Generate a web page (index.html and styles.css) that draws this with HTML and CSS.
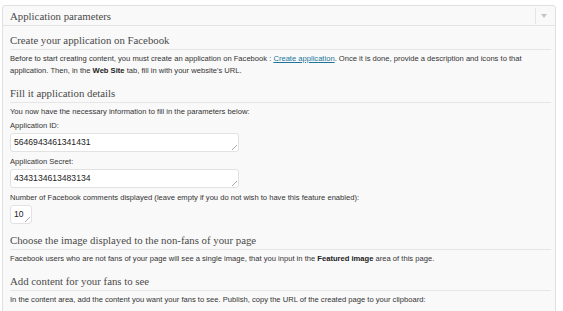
FILE: index.html
```html
<!DOCTYPE html>
<html>
<head>
<meta charset="utf-8">
<link rel="stylesheet" href="styles.css">
</head>
<body>
<div class="postbox">
  <div class="postbox-header">
    <h2 class="postbox-title">Application parameters</h2>
    <div class="toggle"><span class="arrow"></span></div>
  </div>
  <div class="inside">
    <h3 class="section-title">Create your application on Facebook</h3>
    <p class="text">Before to start creating content, you must create an application on Facebook : <a class="link" href="#">Create application</a>. Once it is done, provide a description and icons to that application. Then, in the <b>Web Site</b> tab, fill in with your website's URL.</p>

    <h3 class="section-title">Fill it application details</h3>
    <p class="text">You now have the necessary information to fill in the parameters below:</p>
    <label class="label">Application ID:</label>
    <div class="field wide">5646943461341431<span class="grip"></span></div>
    <label class="label">Application Secret:</label>
    <div class="field wide">4343134613483134<span class="grip"></span></div>
    <label class="label">Number of Facebook comments displayed (leave empty if you do not wish to have this feature enabled):</label>
    <div class="field small">10<span class="grip"></span></div>

    <h3 class="section-title">Choose the image displayed to the non-fans of your page</h3>
    <p class="text">Facebook users who are not fans of your page will see a single image, that you input in the <b>Featured image</b> area of this page.</p>

    <h3 class="section-title">Add content for your fans to see</h3>
    <p class="text">In the content area, add the content you want your fans to see. Publish, copy the URL of the created page to your clipboard:</p>
  </div>
</div>
</body>
</html>
```

FILE: styles.css
```css
html, body {
  margin: 0;
  padding: 0;
  background: #ffffff;
}

body {
  font-family: "Liberation Sans", Arial, sans-serif;
  color: #333333;
}

.postbox {
  margin: 5px 7px 0 2px;
  border: 1px solid #e0e0e0;
  border-radius: 3px;
  background: #f9f9f9;
  height: 320px;
}

.postbox-header {
  display: flex;
  align-items: center;
  height: 19px;
  border-bottom: 1px solid #e3e3e3;
}

.postbox-title {
  flex: 1;
  margin: 0;
  padding-left: 7px;
  font-family: "Liberation Serif", "Times New Roman", serif;
  font-weight: normal;
  font-size: 10.8px;
  color: #4a4a4a;
}

.toggle {
  width: 16px;
  height: 16px;
  margin-right: 3px;
  border-left: 1px solid #e6e6e6;
  display: flex;
  align-items: center;
  justify-content: center;
}

.arrow {
  width: 0;
  height: 0;
  border-left: 3px solid transparent;
  border-right: 3px solid transparent;
  border-top: 4px solid #c4c4c4;
}

.inside {
  padding: 0 4px 0 7px;
}

.section-title {
  margin: 0;
  padding: 8px 0 3px 0;
  font-family: "Liberation Serif", "Times New Roman", serif;
  font-weight: normal;
  font-size: 10.8px;
  line-height: 12px;
  color: #4a4a4a;
  border-bottom: 1px solid #e6e6e6;
}

.text {
  margin: 3px 0 2px 0;
  max-width: 530px;
  font-size: 7.6px;
  line-height: 12px;
}

.text b {
  color: #222;
}

.link {
  color: #21759b;
}

.label {
  display: block;
  font-size: 7.6px;
  line-height: 10px;
  margin-top: 5px;
}

.text + .label {
  margin-top: 3px;
}

.field {
  position: relative;
  box-sizing: border-box;
  height: 19px;
  margin: 2px 0 0 0;
  padding: 0 3px;
  background: #ffffff;
  border: 1px solid #e2e2e2;
  border-radius: 3px;
  font-size: 8.6px;
  line-height: 17px;
  color: #222;
}

.field + .section-title {
  margin-top: 2px;
}

.wide {
  width: 229px;
}

.small {
  width: 22px;
}

.grip {
  position: absolute;
  right: 1px;
  bottom: 1px;
  width: 5px;
  height: 5px;
  background: linear-gradient(135deg, transparent 45%, #aaa 46%, #aaa 54%, transparent 55%, transparent 70%, #aaa 71%, #aaa 79%, transparent 80%);
}
```
